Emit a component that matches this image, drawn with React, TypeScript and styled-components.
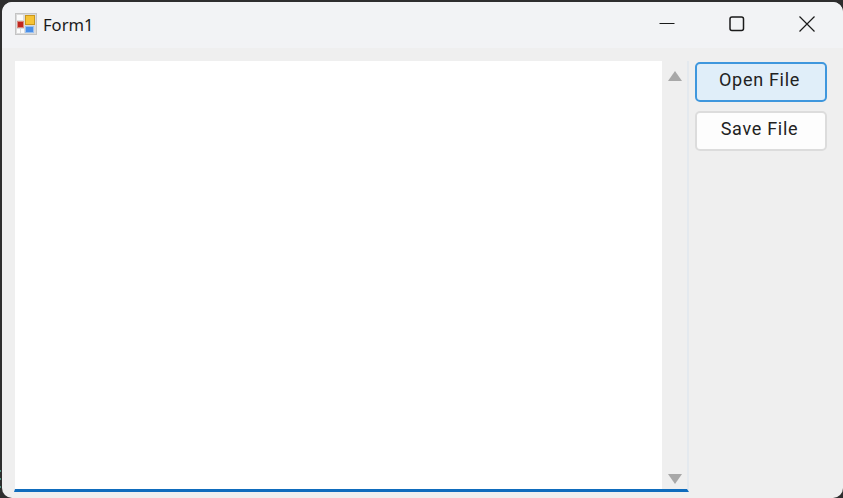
import React from 'react';
import styled, { createGlobalStyle } from 'styled-components';

const GlobalStyle = createGlobalStyle`
  html, body {
    margin: 0;
    padding: 0;
    background: #2e2e2e;
    overflow: hidden;
  }
`;

const Desktop = styled.div`
  width: 843px;
  height: 498px;
  box-sizing: border-box;
  padding: 2px 0 0 2px;
  background:
    linear-gradient(#4f9080, #4f9080) 0 470px / 1px 2px no-repeat,
    linear-gradient(#4f9080, #4f9080) 0 478px / 1px 2px no-repeat,
    linear-gradient(#4f9080, #4f9080) 0 486px / 1px 2px no-repeat,
    #2e2e2e;
`;

const Window = styled.div`
  width: 841px;
  height: 496px;
  display: flex;
  flex-direction: column;
  border-radius: 10px;
  overflow: hidden;
  background: #efefef;
  font-family: 'Noto Sans', 'Liberation Sans', sans-serif;
`;

const TitleBar = styled.div`
  height: 46px;
  flex: none;
  display: flex;
  align-items: center;
  padding-right: 1px;
  background: #f2f3f5;
`;

const AppIcon = styled.svg`
  width: 22px;
  height: 22px;
  margin: 0 0 2px 13px;
  flex: none;
`;

const Title = styled.div`
  margin-left: 6px;
  font-size: 16.6px;
  line-height: 22px;
  color: #1a1a1a;
  flex: 1;
`;

const CaptionButton = styled.div`
  width: 70px;
  height: 46px;
  box-sizing: border-box;
  padding-bottom: 2px;
  display: flex;
  align-items: center;
  justify-content: center;
`;

const Body = styled.div`
  flex: 1;
  display: flex;
  align-items: flex-start;
  gap: 6px;
  padding: 13px 16px 0 12px;
`;

const TextBox = styled.div`
  width: 675px;
  height: 431px;
  box-sizing: border-box;
  flex: none;
  display: flex;
  background: #ffffff;
  border-left: 1px solid #efefef;
  border-right: 2px solid #e4e9ee;
  border-bottom: 3px solid #0f6cbd;
`;

const Editor = styled.div`
  flex: 1;
`;

const ScrollBar = styled.div`
  width: 25px;
  display: flex;
  flex-direction: column;
  justify-content: space-between;
  align-items: center;
  padding: 10px 0 5px;
  background: #efefef;
`;

const Arrow = styled.div<{ $down?: boolean }>`
  width: 0;
  height: 0;
  border-left: 7px solid transparent;
  border-right: 7px solid transparent;
  ${(p) =>
    p.$down
      ? 'border-top: 10px solid #a8a8a8;'
      : 'border-bottom: 10px solid #a8a8a8;'}
`;

const ButtonColumn = styled.div`
  display: flex;
  flex-direction: column;
  gap: 9px;
  padding-top: 1px;
`;

const ActionButton = styled.button<{ $active?: boolean }>`
  width: 132px;
  height: 40px;
  box-sizing: border-box;
  padding: 0 3px 5px 0;
  border-radius: 5px;
  font-family: Roboto, 'Noto Sans', sans-serif;
  font-size: 18px;
  letter-spacing: 0.7px;
  color: #222222;
  background: ${(p) => (p.$active ? '#e0eef9' : '#fdfdfd')};
  border: ${(p) => (p.$active ? '2px solid #3f97dd' : '2px solid #dcdcdc')};
`;

export default function App() {
  return (
    <>
      <GlobalStyle />
      <Desktop>
        <Window>
          <TitleBar>
            <AppIcon viewBox="0 0 22 22">
              <rect x="0.5" y="0.5" width="21" height="21" fill="#dcdcdc" stroke="#c4c4c4" />
              <rect x="2" y="2" width="6" height="5" fill="#fbfbfb" />
              <rect x="2" y="16" width="3" height="4" fill="#fbfbfb" />
              <rect x="6" y="16" width="3" height="4" fill="#fbfbfb" />
              <rect x="2.5" y="8.5" width="6" height="6" fill="#c0261e" stroke="#d98a80" />
              <rect x="10.5" y="2.5" width="9" height="9" fill="#f6c335" stroke="#c9971c" />
              <rect x="10.5" y="13.5" width="8" height="6" fill="#4a8fe8" stroke="#9cc1ef" />
            </AppIcon>
            <Title>Form1</Title>
            <CaptionButton>
              <svg width="16" height="16" viewBox="0 0 16 16">
                <path d="M0.5 7.5H15.5" stroke="#1a1a1a" strokeWidth="1" fill="none" />
              </svg>
            </CaptionButton>
            <CaptionButton>
              <svg width="16" height="16" viewBox="0 0 16 16">
                <rect x="1" y="1" width="13.5" height="13.5" rx="2" stroke="#1a1a1a" strokeWidth="1.5" fill="none" />
              </svg>
            </CaptionButton>
            <CaptionButton>
              <svg width="16" height="16" viewBox="0 0 16 16">
                <path d="M0.5 0.5L15.5 15.5M15.5 0.5L0.5 15.5" stroke="#1a1a1a" strokeWidth="1.2" fill="none" />
              </svg>
            </CaptionButton>
          </TitleBar>
          <Body>
            <TextBox>
              <Editor />
              <ScrollBar>
                <Arrow />
                <Arrow $down />
              </ScrollBar>
            </TextBox>
            <ButtonColumn>
              <ActionButton $active>Open File</ActionButton>
              <ActionButton>Save File</ActionButton>
            </ButtonColumn>
          </Body>
        </Window>
      </Desktop>
    </>
  );
}
